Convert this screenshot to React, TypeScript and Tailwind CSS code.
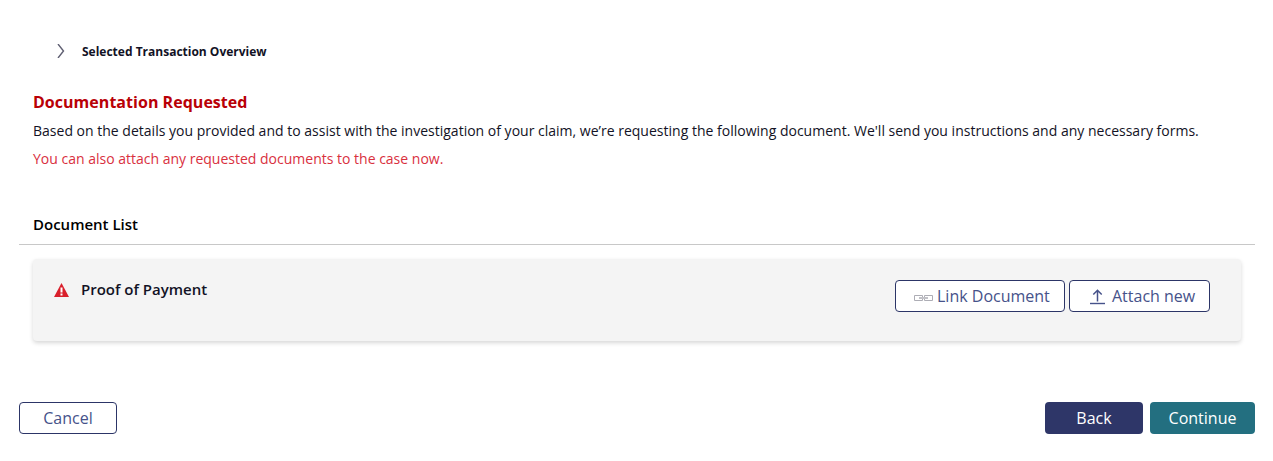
function WarningIcon() {
  return (
    <svg width="15" height="14" viewBox="0 0 15 14" className="mt-[3px] block">
      <path d="M7.500 0 15 14H0Z" fill="#d91f2b" />
      <path d="M7.500 4.500v5M7.500 10.500v2" stroke="#fff" strokeWidth="2" />
    </svg>
  )
}

function LinkIcon() {
  return (
    <svg width="19" height="6" viewBox="0 0 19 6" fill="none" stroke="#adadb5" className="mt-1 block">
      <path d="M8.500 2v-1.500h-8v5h8V4M10.500 2v-1.500h8v5h-8V4" />
      <path d="M5 3h9" strokeWidth="1.500" />
    </svg>
  )
}

function UploadIcon() {
  return (
    <svg width="15" height="16" viewBox="0 0 15 16" fill="none" stroke="#46528a" className="mt-[2px] block">
      <path d="M7.500 12.500V1.500M3.300 5.500l4.200-4.200 4.200 4.200" strokeWidth="1.500" />
      <path d="M0 14.500h15" strokeWidth="1.400" />
    </svg>
  )
}

export default function App() {
  return (
    <main className="h-[461px] w-[1273px] bg-white pt-[41px] pr-[18px] pl-[19px] font-['Open_Sans',sans-serif] text-[#121225]">
      <div className="flex h-[22px] items-center pl-[38px]">
        <svg width="8" height="14" viewBox="0 0 8 14" fill="none" stroke="#5f5f72" className="mr-[17px] mb-[2px]">
          <path d="m1 0 5.500 7L1 14" strokeWidth="1.400" />
        </svg>
        <span className="text-[12px] font-bold">Selected Transaction Overview</span>
      </div>

      <section className="mt-[27px] pl-[14px]">
        <h1 className="text-[16px] leading-[24px] font-bold tracking-[0.03px] text-[#b90006]">Documentation Requested</h1>
        <p className="mt-[3px] text-[14px] leading-[28px] tracking-[0.007px] whitespace-nowrap">
          Based on the details you provided and to assist with the investigation of your claim, we’re requesting the following document. We'll send you instructions and any necessary forms.
        </p>
        <p className="text-[14px] leading-[28px] text-[#d9303e]">You can also attach any requested documents to the case now.</p>
      </section>

      <h2 className="mt-[40px] flex h-[32px] border-b border-[#c8c8c8] pl-[14px] text-[15px] leading-[22px] font-semibold text-black">Document List</h2>

      <div className="mt-[14px] ml-[14px] flex h-[82px] w-[1208px] rounded bg-[#f4f4f4] pt-[21px] pr-[31px] pl-[21px] shadow-[0_2px_4px_rgba(0,0,0,0.16)]">
        <WarningIcon />
        <span className="ml-3 text-[15px] leading-[18px] font-semibold">Proof of Payment</span>
        <div className="ml-auto flex gap-1 text-[16px] text-[#46528a]">
          <button className="flex h-8 w-[170px] items-center gap-1 rounded border border-[#2c3567] bg-white pl-[18px]"><LinkIcon />Link Document</button>
          <button className="flex h-8 w-[141px] items-center gap-[7px] rounded border border-[#2c3567] bg-white pl-5"><UploadIcon />Attach new</button>
        </div>
      </div>

      <footer className="mt-[61px] flex text-[16px]">
        <button className="h-8 w-[98px] rounded border border-[#2c3567] text-[#46528a]">Cancel</button>
        <button className="mr-[7px] ml-auto h-8 w-[98px] rounded bg-[#2e3668] text-white">Back</button>
        <button className="h-8 w-[105px] rounded bg-[#236f80] text-white">Continue</button>
      </footer>
    </main>
  )
}
